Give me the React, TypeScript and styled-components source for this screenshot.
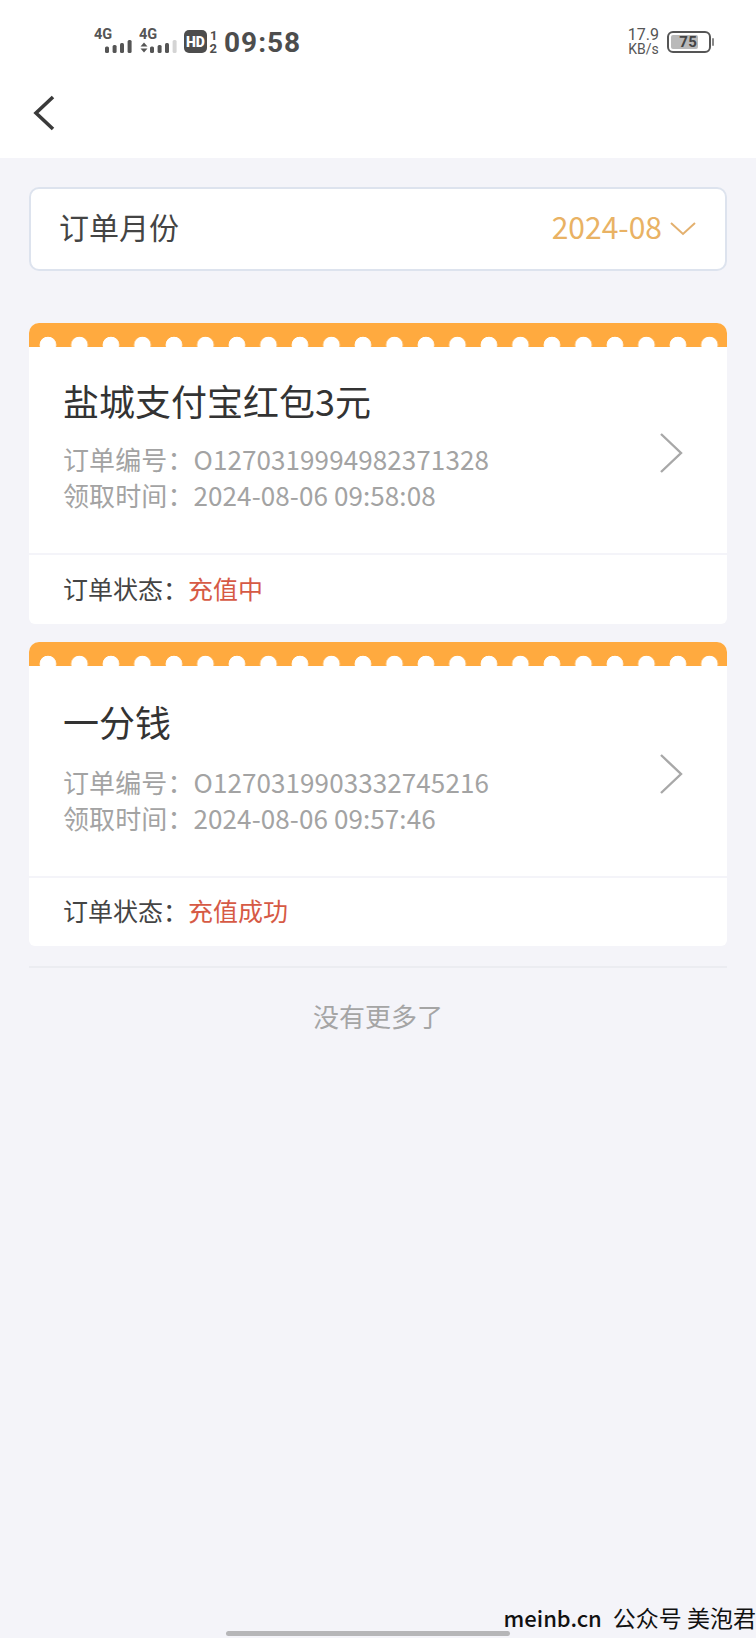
import React from "react";
import styled, { createGlobalStyle } from "styled-components";

interface IOrder {
  title: string;
  orderNo: string;
  time: string;
  status: string;
  extra: number;
}

const orders: IOrder[] = [
  {
    title: "盐城支付宝红包3元",
    orderNo: "O1270319994982371328",
    time: "2024-08-06 09:58:08",
    status: "充值中",
    extra: 0,
  },
  {
    title: "一分钱",
    orderNo: "O1270319903332745216",
    time: "2024-08-06 09:57:46",
    status: "充值成功",
    extra: 2,
  },
];

const GlobalStyle = createGlobalStyle`
  html, body {
    margin: 0;
    padding: 0;
    background: #f4f4f9;
    font-family: "Noto Sans CJK SC", "Noto Sans", sans-serif;
  }
  * { box-sizing: border-box; }
`;

const Page = styled.div`
  position: relative;
  width: 756px;
  height: 1638px;
  overflow: hidden;
  background: #f4f4f9;
`;

const Header = styled.div`
  height: 158px;
  background: #fff;
`;

const StatusBar = styled.div`
  height: 84px;
  padding: 0 42px 0 94px;
  display: flex;
  align-items: center;
  color: #4a4a4a;
`;

const Signals = styled.div`
  display: flex;
  align-items: center;
  gap: 5px;
`;

const Clock = styled.span`
  margin-left: 7px;
  font-family: Roboto, sans-serif;
  font-weight: 700;
  font-size: 28px;
  letter-spacing: 1px;
  color: #4d4d4d;
`;

const StatusRight = styled.div`
  margin-left: auto;
  display: flex;
  align-items: center;
  gap: 8px;
`;

const Speed = styled.div`
  display: flex;
  flex-direction: column;
  align-items: center;
  font-family: Roboto, sans-serif;
  color: #555;
`;

const SpeedValue = styled.span`
  font-size: 16px;
  line-height: 14px;
`;

const SpeedUnit = styled.span`
  font-size: 14px;
  line-height: 14px;
`;

const Battery = styled.div`
  position: relative;
  width: 44px;
  height: 22px;
  border: 2px solid #555;
  border-radius: 6px;
  padding: 2px;
  margin-right: 3px;
  &::after {
    content: "";
    position: absolute;
    right: -5px;
    top: 5px;
    width: 2px;
    height: 8px;
    background: #888;
    border-radius: 1px;
  }
`;

const BatteryFill = styled.div`
  width: 76%;
  height: 100%;
  padding-right: 1px;
  border-radius: 2px;
  background: #b9b9b9;
  font-family: Roboto, sans-serif;
  font-weight: 700;
  font-size: 15px;
  line-height: 14px;
  letter-spacing: 0.4px;
  color: #444;
  text-align: right;
`;

const NavBar = styled.div`
  height: 74px;
  padding: 10px 0 0 31px;
`;

const Content = styled.div`
  padding: 29px 29px 0;
`;

const MonthBox = styled.div`
  height: 84px;
  margin-bottom: 52px;
  padding: 0 28px;
  display: flex;
  align-items: center;
  justify-content: space-between;
  background: #fff;
  border: 2px solid #dde3ee;
  border-radius: 10px;
`;

const MonthLabel = styled.span`
  margin-bottom: 6px;
  font-size: 30px;
  color: #444;
`;

const MonthValue = styled.span`
  display: flex;
  align-items: center;
  gap: 7px;
  color: #e9b264;
`;

const MonthText = styled.span`
  margin-bottom: 6px;
  font-size: 30px;
`;

const Card = styled.div`
  margin-bottom: 18px;
  background: #fff;
  border-radius: 10px 10px 6px 6px;
  overflow: hidden;
`;

const Band = styled.div`
  height: 24px;
  background-color: #ffaa3f;
  background-image: radial-gradient(circle at 50% 22px, #fff 8px, transparent 8.6px);
  background-size: 31.5px 24px;
  background-position: 3.2px 0;
  background-repeat: repeat-x;
`;

const CardBody = styled.div<{ $extra: number }>`
  height: ${(p) => 208 + p.$extra * 2}px;
  padding: ${(p) => 25 + p.$extra}px 34px 0;
  display: flex;
  justify-content: space-between;
  border-bottom: 2px solid #f4f4f9;
`;

const Title = styled.div<{ $extra: number }>`
  font-size: 36px;
  line-height: 56px;
  color: #333;
  margin-bottom: ${(p) => 13 + p.$extra}px;
`;

const Detail = styled.div`
  font-size: 26px;
  line-height: 35.5px;
  letter-spacing: 0.1px;
  color: #a3a3a3;
  white-space: nowrap;
`;

const Arrow = styled.div`
  margin: 60px 10px 0 0;
`;

const CardFooter = styled.div<{ $extra: number }>`
  height: ${(p) => 69 - p.$extra / 2}px;
  padding: 0 34px 4px;
  display: flex;
  align-items: center;
  font-size: 25px;
  color: #444;
`;

const Status = styled.span`
  color: #d65a45;
`;

const EndNote = styled.div`
  margin-top: 20px;
  padding-top: 26px;
  border-top: 2px solid #ebecf1;
  text-align: center;
  font-size: 26px;
  line-height: 44px;
  color: #a5a5a5;
`;

const Watermark = styled.div`
  position: absolute;
  right: 0;
  bottom: 3px;
  display: flex;
  align-items: center;
  gap: 11px;
  font-size: 23px;
  line-height: 36px;
  color: #111;
  white-space: nowrap;
`;

const WatermarkSite = styled.span`
  font-size: 22px;
  font-weight: 500;
`;

const HomeBar = styled.div`
  position: absolute;
  left: 226px;
  bottom: 2px;
  width: 284px;
  height: 5px;
  border-radius: 3px;
  background: #b6b6b8;
`;

const SignalIcon: React.FC<{ arrows?: boolean; faded?: boolean }> = ({ arrows, faded }) => (
  <svg width="40" height="30" viewBox="0 0 40 30">
    <text x="0" y="12" fontFamily="Roboto, sans-serif" fontWeight="700" fontSize="14.5" fill="#555">
      4G
    </text>
    {arrows && <path d="M1.5 19.5 L5 15.5 L8.5 19.5 Z M1.5 21.5 L5 25.5 L8.5 21.5 Z" fill="#555" />}
    <rect x="11" y="19.5" width="4" height="6.5" rx="1.5" fill="#555" />
    <rect x="18.6" y="18" width="4" height="8" rx="1.5" fill="#555" />
    <rect x="26" y="16" width="4" height="10" rx="1.5" fill="#555" />
    <rect x="33.6" y="13" width="4" height="13" rx="1.5" fill={faded ? "#d4d4d4" : "#555"} />
  </svg>
);

const HdIcon = () => (
  <svg width="33" height="30" viewBox="0 0 33 30">
    <rect x="0" y="3" width="23" height="23" rx="5" fill="#4d4d4d" />
    <text x="2" y="20" fontFamily="Roboto, sans-serif" fontWeight="900" fontSize="14" fill="#fff">
      HD
    </text>
    <text x="26" y="13" fontFamily="Roboto, sans-serif" fontWeight="700" fontSize="13" fill="#4d4d4d">
      1
    </text>
    <text x="25.5" y="26" fontFamily="Roboto, sans-serif" fontWeight="700" fontSize="13" fill="#4d4d4d">
      2
    </text>
  </svg>
);

const BackIcon = () => (
  <svg width="26" height="38" viewBox="0 0 26 38">
    <path d="M22 3 L5 19 L22 35" fill="none" stroke="#3a3a3a" strokeWidth="3.6" />
  </svg>
);

const ChevronDown = () => (
  <svg width="28" height="16" viewBox="0 0 28 16">
    <path d="M2 2 L14 13 L26 2" fill="none" stroke="#e3b06e" strokeWidth="2" />
  </svg>
);

const ChevronRight = () => (
  <svg width="24" height="42" viewBox="0 0 24 42">
    <path d="M2 2 L22 21 L2 40" fill="none" stroke="#a8a8a8" strokeWidth="2.4" />
  </svg>
);

const OrderCard: React.FC<IOrder> = ({ title, orderNo, time, status, extra }) => (
  <Card>
    <Band />
    <CardBody $extra={extra}>
      <div>
        <Title $extra={extra}>{title}</Title>
        <Detail>订单编号：{orderNo}</Detail>
        <Detail>领取时间：{time}</Detail>
      </div>
      <Arrow>
        <ChevronRight />
      </Arrow>
    </CardBody>
    <CardFooter $extra={extra}>
      订单状态：<Status>{status}</Status>
    </CardFooter>
  </Card>
);

const App = () => (
  <Page>
    <GlobalStyle />
    <Header>
      <StatusBar>
        <Signals>
          <SignalIcon />
          <SignalIcon arrows faded />
          <HdIcon />
        </Signals>
        <Clock>09:58</Clock>
        <StatusRight>
          <Speed>
            <SpeedValue>17.9</SpeedValue>
            <SpeedUnit>KB/s</SpeedUnit>
          </Speed>
          <Battery>
            <BatteryFill>75</BatteryFill>
          </Battery>
        </StatusRight>
      </StatusBar>
      <NavBar>
        <BackIcon />
      </NavBar>
    </Header>
    <Content>
      <MonthBox>
        <MonthLabel>订单月份</MonthLabel>
        <MonthValue>
          <MonthText>2024-08</MonthText>
          <ChevronDown />
        </MonthValue>
      </MonthBox>
      {orders.map((order) => (
        <OrderCard key={order.orderNo} {...order} />
      ))}
      <EndNote>没有更多了</EndNote>
    </Content>
    <Watermark>
      <WatermarkSite>meinb.cn</WatermarkSite>
      <span>公众号 美泡君</span>
    </Watermark>
    <HomeBar />
  </Page>
);

export default App;
